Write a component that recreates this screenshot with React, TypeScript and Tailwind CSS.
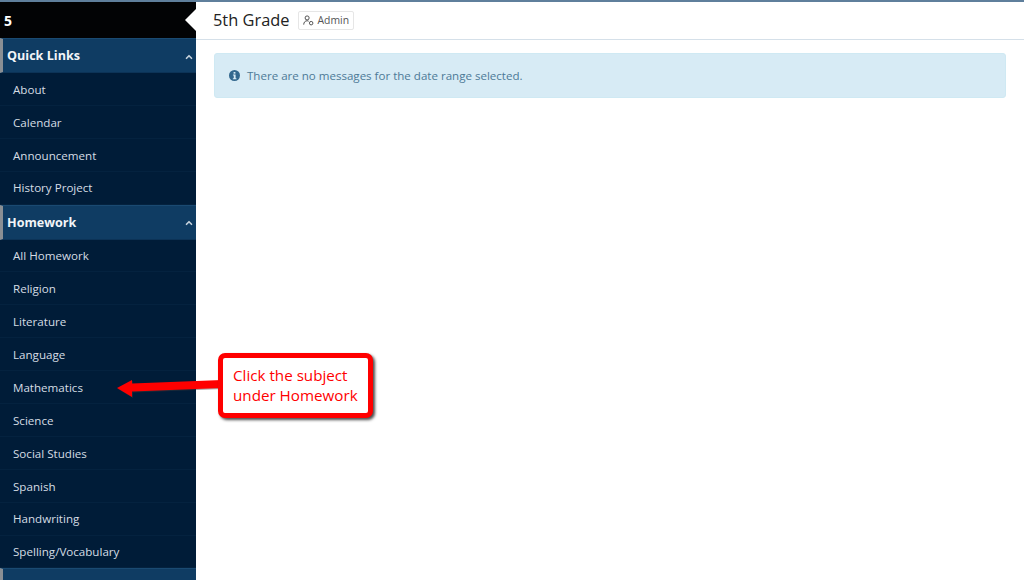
import React from "react";
import { ChevronUp } from "lucide-react";

const quick = ["About", "Calendar", "Announcement", "History Project"];
const homework = ["All Homework", "Religion", "Literature", "Language", "Mathematics", "Science", "Social Studies", "Spanish", "Handwriting", "Spelling/Vocabulary"];

function SectionHead({ label, chevron = true }: { label: string; chevron?: boolean }) {
  return (
    <div className="flex h-[35px] shrink-0 items-center justify-between border-t border-t-[#1a4a72] border-b border-b-[#0c3357] border-l-[3px] border-l-[#8a8f94] bg-[#0f3c63] pl-1 pr-[2px] pt-[2px]">
      <span className="text-[12.6px] font-bold text-[#f2f5f8]">{label}</span>
      {chevron && <ChevronUp size={10} strokeWidth={4} className="text-[#c6d2dc]" />}
    </div>
  );
}

function Item({ label }: { label: string }) {
  return (
    <div className="flex h-[32.9px] shrink-0 items-center border-b border-b-[#04223f] pl-[13px] pt-px text-[11.6px] text-[#d5dde4]">
      {label}
    </div>
  );
}

export default function App() {
  return (
    <div className="relative h-[580px] w-[1024px] overflow-hidden bg-white font-['Open_Sans',sans-serif]">
      <div className="h-0.5 bg-[#5f7f9c]" />
      <div className="flex h-[578px]">
        <aside className="flex w-[196px] shrink-0 flex-col overflow-hidden bg-[#001c38]">
          <div className="relative flex h-9 shrink-0 items-center bg-[#020305] pl-1 text-[14px] font-bold text-white">
            5
            <div className="absolute right-0 top-[7px] h-0 w-0 border-y-[11px] border-r-[11px] border-y-transparent border-r-white" />
          </div>
          <SectionHead label="Quick Links" />
          {quick.map((q) => <Item key={q} label={q} />)}
          <SectionHead label="Homework" />
          {homework.map((q) => <Item key={q} label={q} />)}
          <SectionHead label="" chevron={false} />
        </aside>
        <main className="min-w-0 flex-1">
          <header className="flex h-[38px] items-center gap-[9px] border-b border-b-[#d5e0e9] pl-[17px]">
            <h1 className="text-[16.4px] leading-none text-[#222] [font-weight:500]">5th Grade</h1>
            <div className="flex h-[19px] items-center gap-[3px] rounded-[2px] border border-[#e6e6e6] pl-[4px] pr-[4px] text-[10.4px] text-[#555]">
              <svg width="11" height="11" viewBox="0 0 12 12" fill="none" stroke="#444" strokeWidth="1">
                <circle cx="4.5" cy="3.2" r="2.2" />
                <path d="M.8 10.5c0-2.6 1.6-4.2 3.7-4.2 .7 0 1.2.2 1.7.5" />
                <circle cx="8.9" cy="8.9" r="1.9" />
              </svg>
              Admin
            </div>
          </header>
          <div className="mx-[18px] mt-[13px] flex h-[45px] items-center rounded-[3px] border border-[#cfe9f3] bg-[#d7ebf5] pl-[14px] text-[11.55px] text-[#4d7a97]">
            <svg width="11" height="11" viewBox="0 0 12 12" className="mr-[7px] shrink-0">
              <circle cx="6" cy="6" r="6" fill="#33688e" />
              <rect x="5" y="2.2" width="2" height="1.8" fill="#d7ebf5" />
              <path d="M4.3 5h2.9v4h.9v1H4.2V9h1V6h-.9z" fill="#d7ebf5" />
            </svg>
            There are no messages for the date range selected.
          </div>
        </main>
      </div>

      <svg className="absolute left-[110px] top-[370px]" width="115" height="30" viewBox="0 0 115 30">
        <path d="M112 10 L22 13.5 L22 10 L7 18 L22 27 L22 21.5 L112 18 Z" fill="#3b3b3b" opacity="0.45" transform="translate(1 1)" />
        <path d="M112 10 L22 13.5 L22 10 L7 18 L22 27 L22 21.5 L112 18 Z" fill="#ff0000" />
      </svg>
      <div className="absolute left-[218px] top-[353px] flex h-[65px] w-[155px] flex-col justify-center rounded-[7px] border-[5px] border-[#ff0000] bg-white pb-[2px] pl-[10px] text-[15.2px] leading-[20px] text-[#ff0000] shadow-[2px_2px_3px_rgba(0,0,0,0.7)]">
        <div>Click the subject</div>
        <div>under Homework</div>
      </div>
    </div>
  );
}
